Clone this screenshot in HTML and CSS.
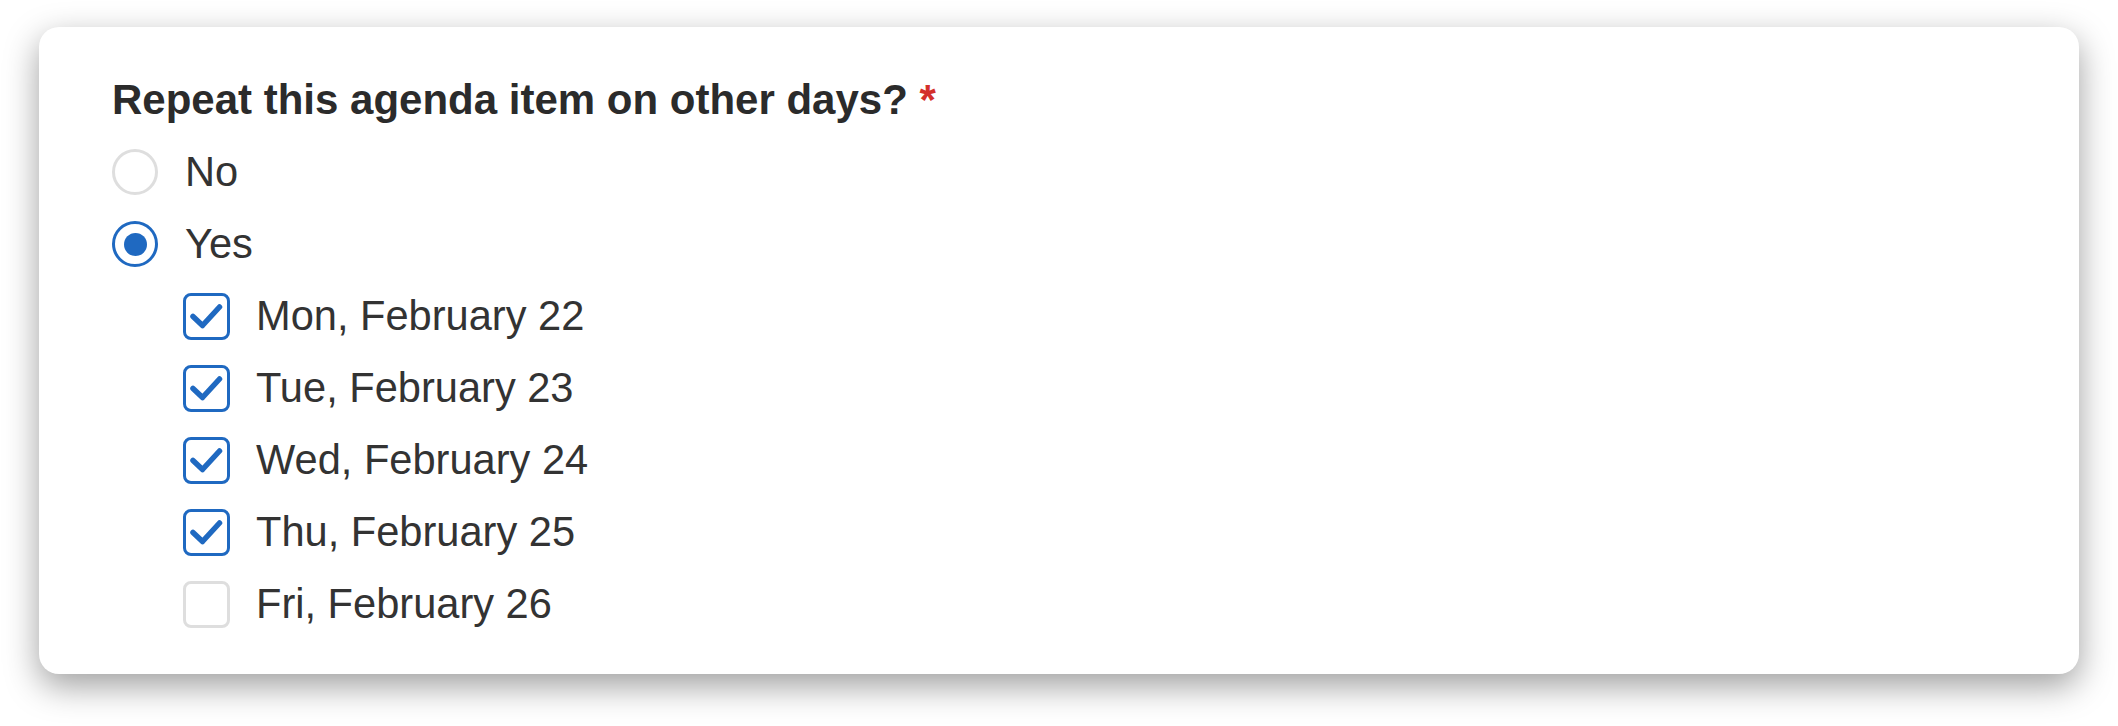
FILE: index.html
```html
<!DOCTYPE html>
<html lang="en">
<head>
<meta charset="utf-8">
<title>Repeat agenda item</title>
<link rel="stylesheet" href="styles.css">
</head>
<body>
  <div class="card">
    <div class="question">Repeat this agenda item on other days? <span class="req">*</span></div>
    <div class="option">
      <span class="radio"></span>
      <span class="label">No</span>
    </div>
    <div class="option">
      <span class="radio selected"><span class="dot"></span></span>
      <span class="label">Yes</span>
    </div>
    <div class="days">
      <div class="option">
        <span class="check checked"><svg viewBox="0 0 47 47" width="47" height="47"><path d="M10 23.5 L19.5 32.5 L36.5 14" /></svg></span>
        <span class="label">Mon, February 22</span>
      </div>
      <div class="option">
        <span class="check checked"><svg viewBox="0 0 47 47" width="47" height="47"><path d="M10 23.5 L19.5 32.5 L36.5 14" /></svg></span>
        <span class="label">Tue, February 23</span>
      </div>
      <div class="option">
        <span class="check checked"><svg viewBox="0 0 47 47" width="47" height="47"><path d="M10 23.5 L19.5 32.5 L36.5 14" /></svg></span>
        <span class="label">Wed, February 24</span>
      </div>
      <div class="option">
        <span class="check checked"><svg viewBox="0 0 47 47" width="47" height="47"><path d="M10 23.5 L19.5 32.5 L36.5 14" /></svg></span>
        <span class="label">Thu, February 25</span>
      </div>
      <div class="option">
        <span class="check"></span>
        <span class="label">Fri, February 26</span>
      </div>
    </div>
  </div>
</body>
</html>
```

FILE: styles.css
```css
html, body {
  margin: 0;
  padding: 0;
  background: #ffffff;
}

body {
  box-sizing: border-box;
  min-height: 726px;
  font-family: "Liberation Sans", Arial, sans-serif;
  color: #333333;
  padding: 27px 39px 52px 39px;
}

.card {
  box-sizing: border-box;
  width: 2040px;
  height: 647px;
  background: #ffffff;
  border-radius: 20px;
  box-shadow: 0 12px 34px rgba(0, 0, 0, 0.38);
  padding: 37px 74px 35px 73px;
}

.question {
  font-size: 42px;
  font-weight: 700;
  line-height: 72px;
  color: #2b2b2b;
}

.req {
  color: #d4302b;
  font-weight: 700;
}

.option {
  display: flex;
  align-items: center;
  height: 72px;
  font-size: 41.6px;
  line-height: 72px;
}

.days {
  padding-left: 71px;
}

.radio {
  box-sizing: border-box;
  width: 46px;
  height: 46px;
  border-radius: 50%;
  border: 3px solid #dedede;
  margin-right: 27px;
  display: flex;
  align-items: center;
  justify-content: center;
  flex: none;
}

.radio.selected {
  border-color: #1f69c1;
}

.dot {
  width: 23px;
  height: 23px;
  border-radius: 50%;
  background: #1f69c1;
}

.check {
  box-sizing: border-box;
  width: 47px;
  height: 47px;
  border: 3px solid #dedede;
  border-radius: 8px;
  margin-right: 26px;
  flex: none;
  position: relative;
}

.check.checked {
  border-color: #1f69c1;
}

.check svg {
  position: absolute;
  left: -3px;
  top: -3px;
}

.check svg path {
  fill: none;
  stroke: #1f69c1;
  stroke-width: 5.5;
  stroke-linecap: round;
  stroke-linejoin: round;
}

.label {
  white-space: nowrap;
}
```
